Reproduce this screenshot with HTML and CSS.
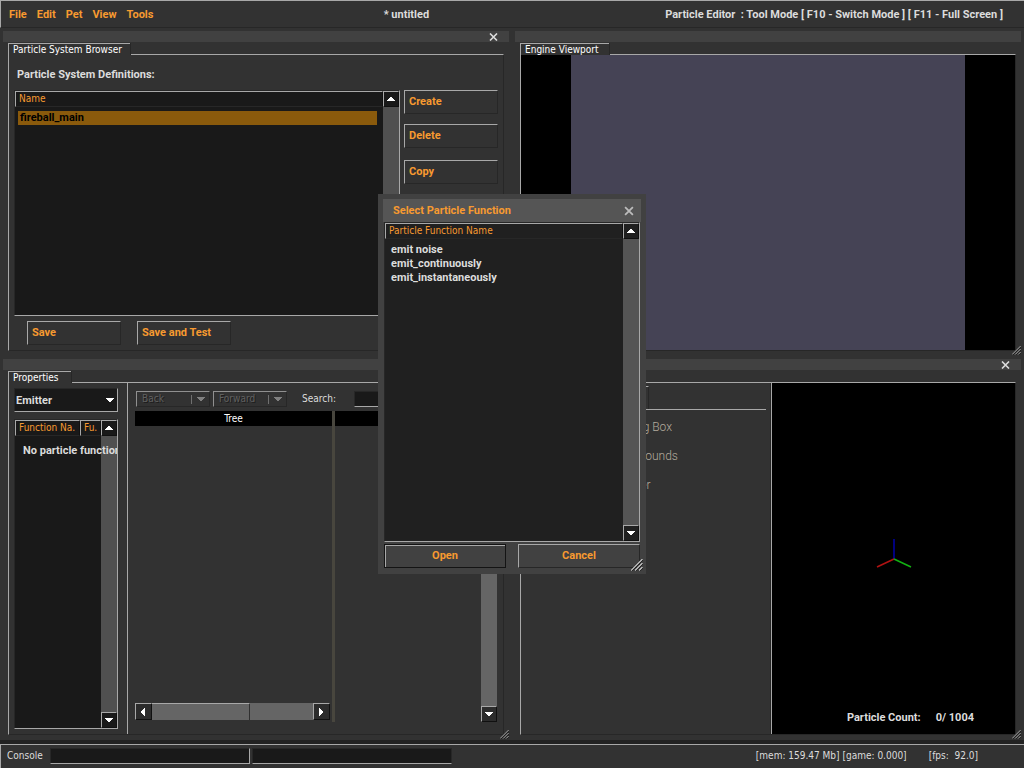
FILE: index.html
```html
<!DOCTYPE html>
<html lang="en">
<head>
<meta charset="utf-8">
<title>Particle Editor</title>
<link rel="stylesheet" href="styles.css">
</head>
<body>
<svg width="0" height="0" class="defs" aria-hidden="true">
  <symbol id="up" viewBox="0 0 8 5"><path d="M3 0h2v1h1v1h1v1h1v1H0V3h1V2h1V1h1z"/></symbol>
  <symbol id="down" viewBox="0 0 8 5"><path d="M0 0h8v1H7v1H6v1H5v1H3V3H2V2H1V1H0z"/></symbol>
  <symbol id="left" viewBox="0 0 5 8"><path d="M4 0v8H3V7H2V6H1V5H0V3h1V2h1V1h1V0z"/></symbol>
  <symbol id="right" viewBox="0 0 5 8"><path d="M0 0v8h1V7h1V6h1V5h1V3H3V2H2V1H1V0z"/></symbol>
  <symbol id="close" viewBox="0 0 9 8"><path d="M1 .5l7 7M8 .5l-7 7" fill="none" stroke="currentColor" stroke-width="1.600"/></symbol>
  <symbol id="grip" viewBox="0 0 12 12"><path d="M0 12L12 0M4 12l8-8M8 12l4-4" fill="none" stroke="#111" stroke-width="2"/><path d="M0 11.500L11.500 0M4 11.500l7.500-7.500M8 11.500l3.500-3.500" fill="none" stroke="#d0d0d0" stroke-width="1.200"/></symbol>
</svg>

<header class="menubar">
  <nav class="menu">
    <button>File</button><button>Edit</button><button>Pet</button><button>View</button><button>Tools</button>
  </nav>
  <div class="menu-info">
    <span>* untitled</span>
    <span class="mode">Particle Editor&nbsp; : Tool Mode [ F10 - Switch Mode ] [ F11 - Full Screen ]</span>
  </div>
</header>

<main class="desktop">
  <section class="window">
    <div class="titlebar"><button class="close" aria-label="Close"><svg><use href="#close"/></svg></button></div>
    <h2 class="tab tab-browser">Particle System Browser</h2>
    <div class="panel browser">
      <h3 class="heading">Particle System Definitions:</h3>
      <div class="browser-row">
        <div class="list">
          <table class="rows">
            <thead><tr><th>Name</th></tr></thead>
            <tbody><tr class="selected"><td>fireball_main</td></tr></tbody>
          </table>
          <div class="scroll">
            <button class="arrow" aria-label="Scroll up"><svg><use href="#up"/></svg></button>
            <div class="track"></div>
            <button class="arrow" aria-label="Scroll down"><svg><use href="#down"/></svg></button>
          </div>
        </div>
        <div class="actions">
          <button class="btn">Create</button>
          <button class="btn">Delete</button>
          <button class="btn copy">Copy</button>
        </div>
      </div>
      <div class="saves">
        <button class="btn">Save</button>
        <button class="btn">Save and Test</button>
      </div>
    </div>
  </section>

  <section class="window">
    <div class="titlebar"></div>
    <h2 class="tab tab-engine">Engine Viewport</h2>
    <div class="panel viewport"><div class="scene"></div></div>
    <svg class="grip"><use href="#grip"/></svg>
  </section>

  <section class="window">
    <div class="titlebar"></div>
    <h2 class="tab tab-props">Properties</h2>
    <div class="panel split">
      <div class="functions">
        <div class="select">
          <select aria-label="Object type"><option>Emitter</option></select>
          <svg><use href="#down"/></svg>
        </div>
        <div class="list function-list">
          <table class="rows">
            <thead><tr><th class="wide">Function Na.</th><th>Fu.</th></tr></thead>
            <tbody><tr><td colspan="2">No particle functions</td></tr></tbody>
          </table>
          <div class="scroll">
            <button class="arrow" aria-label="Scroll up"><svg><use href="#up"/></svg></button>
            <div class="track"></div>
            <button class="arrow" aria-label="Scroll down"><svg><use href="#down"/></svg></button>
          </div>
        </div>
      </div>
      <div class="tree-pane">
        <div class="toolbar">
          <button class="nav" disabled><span>Back</span><svg><use href="#down"/></svg></button>
          <button class="nav" disabled><span>Forward</span><svg><use href="#down"/></svg></button>
          <label for="search">Search:</label>
          <input id="search" class="field" type="text">
        </div>
        <div class="tree">
          <div class="column">
            <div class="column-head">Tree</div>
            <div class="hscroll">
              <button class="arrow" aria-label="Scroll left"><svg class="side"><use href="#left"/></svg></button>
              <div class="thumb"></div>
              <div class="rest"></div>
              <button class="arrow" aria-label="Scroll right"><svg class="side"><use href="#right"/></svg></button>
            </div>
          </div>
          <div class="divider"></div>
          <div class="column"><div class="column-head"></div></div>
          <div class="scroll light">
            <button class="arrow" aria-label="Scroll up"><svg><use href="#up"/></svg></button>
            <div class="track"></div>
            <button class="arrow" aria-label="Scroll down"><svg><use href="#down"/></svg></button>
          </div>
        </div>
      </div>
    </div>
    <svg class="grip"><use href="#grip"/></svg>
  </section>

  <section class="window">
    <div class="titlebar"><button class="close" aria-label="Close"><svg><use href="#close"/></svg></button></div>
    <h2 class="tab tab-preview">Preview</h2>
    <div class="panel preview">
      <div class="options">
        <div class="options-tab"></div>
        <ul class="option-list">
          <li>Show Bounding Box</li>
          <li>Show Engine Bounds</li>
          <li>Show Perimeter</li>
        </ul>
      </div>
      <div class="stage">
        <svg class="axes" viewBox="0 0 36 32">
          <path d="M18 21V1" stroke="#0000a8" stroke-width="1.500"/>
          <path d="M18 21L1 29" stroke="#b01212" stroke-width="1.500"/>
          <path d="M18 21l17 8" stroke="#12b012" stroke-width="1.500"/>
        </svg>
        <p class="count"><span>Particle Count:</span><span>0/ 1004</span></p>
      </div>
    </div>
    <svg class="grip"><use href="#grip"/></svg>
  </section>
</main>

<footer class="status">
  <label for="console">Console</label>
  <input id="console" class="field edge" type="text">
  <input class="field" type="text" aria-label="Console output">
  <p class="stats"><span>[mem: 159.47 Mb] [game: 0.000]</span><span>[fps:&nbsp; 92.0]</span></p>
</footer>

<dialog class="dialog" open aria-labelledby="dialog-title">
  <div class="dialog-title">
    <h2 id="dialog-title">Select Particle Function</h2>
    <button class="close" aria-label="Close"><svg><use href="#close"/></svg></button>
  </div>
  <div class="list dialog-list">
    <table class="rows">
      <thead><tr><th>Particle Function Name</th></tr></thead>
      <tbody>
        <tr><td>emit noise</td></tr>
        <tr><td>emit_continuously</td></tr>
        <tr><td>emit_instantaneously</td></tr>
      </tbody>
    </table>
    <div class="scroll">
      <button class="arrow" aria-label="Scroll up"><svg><use href="#up"/></svg></button>
      <div class="track"></div>
      <button class="arrow" aria-label="Scroll down"><svg><use href="#down"/></svg></button>
    </div>
  </div>
  <div class="dialog-actions">
    <button class="btn default">Open</button>
    <button class="btn">Cancel</button>
  </div>
  <svg class="grip"><use href="#grip"/></svg>
</dialog>
</body>
</html>
```
FILE: styles.css
```css
:root {
  --bg: #323232;
  --bar: #414141;
  --well: #191919;
  --line: #a8a8a8;
  --shade: #272727;
  --accent: #f79a30;
  --text: #dcdcdc;
  --bold: bold 11px/14px Roboto, "Liberation Sans", sans-serif;
  --thin: 10px/12px "DejaVu Sans Condensed", "DejaVu Sans", sans-serif;
}

* { box-sizing: border-box; }

body {
  margin: 0;
  height: 100vh;
  display: flex;
  flex-direction: column;
  overflow: hidden;
  background: var(--bg);
  color: var(--text);
  font: var(--bold);
}

h2, h3, p, ul { margin: 0; padding: 0; list-style: none; font: inherit; }
button, input, select { margin: 0; padding: 0; border: 0; border-radius: 0; background: none; color: inherit; font: inherit; }
svg { display: block; fill: currentColor; }
.defs { position: absolute; }

/* Menu bar */
.menubar {
  height: 28px;
  display: grid;
  grid-template-columns: 375fr 641fr;
  align-items: center;
  padding: 2px 0 0 8px;
  border-top: 1px solid var(--line);
  border-left: 1px solid var(--line);
  border-bottom: 1px solid var(--shade);
}
.menu { display: flex; gap: 10px; color: var(--accent); }
.menu-info { display: flex; justify-content: space-between; padding-right: 21px; }

/* Desktop windows */
.desktop {
  flex: 1;
  min-height: 0;
  display: grid;
  grid-template-columns: minmax(0, 1fr) minmax(0, 1fr);
  grid-template-rows: minmax(0, 325fr) minmax(0, 381fr);
  gap: 3px 6px;
  padding: 3px 3px 0;
}
.window { position: relative; display: flex; flex-direction: column; padding-bottom: 5px; }
.titlebar {
  height: 11px;
  display: flex;
  justify-content: flex-end;
  padding-right: 11px;
  background: var(--bar);
}
.close { display: flex; align-items: center; }
.close svg { width: 9px; height: 8px; }
.tab {
  align-self: flex-start;
  z-index: 1;
  height: 12px;
  margin: 1px 5px -1px;
  padding: 0 0 0 4px;
  border: 1px solid var(--line);
  border-width: 1px 0 0 1px;
  box-shadow: 1px 0 var(--shade);
  background: var(--bg);
  color: #fff;
  font: var(--thin);
  white-space: nowrap;
}
.panel {
  flex: 1;
  min-height: 0;
  margin: 0 5px;
  border: 1px solid;
  border-color: var(--line) var(--shade) var(--shade) var(--line);
}
.grip { position: absolute; right: 0; bottom: 1px; width: 9px; height: 9px; }

/* Buttons */
.btn {
  width: 94px;
  height: 24px;
  padding: 0 4px;
  border: 1px solid;
  border-color: var(--line) var(--shade) var(--shade) var(--line);
  color: var(--accent);
  text-align: left;
}

/* Lists */
.list {
  display: grid;
  grid-template-columns: minmax(0, 1fr) 16px;
  border: 1px solid var(--shade);
  border-right-color: var(--line);
  border-bottom-color: var(--line);
  background: var(--well);
}
.rows { align-self: start; width: 100%; border-spacing: 0; table-layout: fixed; }
.rows th {
  height: 16px;
  padding: 0 3px;
  border: 1px solid;
  border-color: var(--line) #101010 var(--shade) var(--line);
  color: var(--accent);
  font: var(--thin);
  text-align: left;
  white-space: nowrap;
}
.rows td { height: 14px; padding: 0 6px; white-space: nowrap; }
.rows tbody::before { content: ""; display: block; height: 4px; }
.selected td {
  border: solid var(--well);
  border-width: 0 6px 0 3px;
  padding: 0 2px;
  background: #8a5a0c;
  color: #000;
}

/* Scroll bars */
.scroll { display: grid; grid-template-rows: 16px 1fr 16px; min-height: 0; }
.arrow {
  display: grid;
  place-items: center;
  border: 1px solid;
  border-color: var(--line) #101010 #101010 var(--line);
  background: var(--well);
  color: #fff;
}
.arrow svg { width: 8px; height: 5px; }
.arrow .side { width: 5px; height: 8px; }
.track { background: #505050; }
.light .track { background: #656565; }
.light .arrow, .hscroll .arrow { background: #2c2c2c; }

/* Particle system browser */
.tab-browser { width: 122px; }
.browser { display: flex; flex-direction: column; padding: 13px 5px 5px; }
.heading { padding: 0 3px 8px; }
.browser-row { flex: 1; min-height: 0; display: grid; grid-template-columns: 1fr 94px; gap: 4px; }
.actions { display: flex; flex-direction: column; gap: 10px; }
.copy { margin-top: 2px; }
.saves { display: flex; gap: 16px; padding: 5px 13px 0; }

/* Engine viewport */
.tab-engine { width: 89px; }
.viewport { display: flex; justify-content: center; background: #000; }
.scene { height: 100%; aspect-ratio: 4 / 3; background: #454355; }

/* Properties */
.tab-props { width: 63px; }
.split { display: grid; grid-template-columns: 118px minmax(0, 1fr); }
.functions { display: flex; flex-direction: column; gap: 7px; padding: 5px 9px 5px 5px; min-height: 0; }
.select { position: relative; color: #fff; }
.select select {
  display: block;
  width: 100%;
  height: 24px;
  padding: 2px 1px 0;
  appearance: none;
  border: 1px solid var(--shade);
  border-right-color: var(--line);
  border-bottom-color: var(--line);
  background: var(--well);
  color: var(--text);
}
.select svg { position: absolute; right: 4px; top: 10px; width: 8px; height: 5px; pointer-events: none; }
.function-list { flex: 1; overflow: hidden; }
.function-list .wide { width: 65px; }
.function-list .rows { position: relative; z-index: 1; }
.function-list td { padding: 4px 8px 0; }
.tree-pane {
  display: flex;
  flex-direction: column;
  gap: 2px;
  min-height: 0;
  padding: 6px 6px 12px 7px;
  border-left: 1px solid var(--line);
}
.toolbar { display: flex; align-items: center; gap: 3px; height: 20px; padding-left: 1px; font: var(--thin); }
.nav {
  display: flex;
  align-items: center;
  justify-content: space-between;
  width: 74px;
  height: 16px;
  padding: 0 4px 0 5px;
  border: 1px solid;
  border-color: #909090 var(--shade) var(--shade) #909090;
  color: #606060;
  text-shadow: 1px 1px #1c1c1c;
}
.nav svg { width: 14px; height: 9px; padding: 2px 0 2px 5px; border-left: 1px solid #707070; color: #808080; }
.toolbar label { padding: 0 15px 0 12px; }
.toolbar .field { flex: 1; min-width: 0; }
.field {
  height: 16px;
  border: 1px solid var(--shade);
  border-bottom-color: var(--line);
  background: var(--well);
  font: var(--thin);
}
.field.edge { border-right-color: var(--line); }
.tree { flex: 1; min-height: 0; display: grid; grid-template-columns: 197px 3px minmax(0, 1fr) 16px; }
.column { display: flex; flex-direction: column; justify-content: space-between; }
.column-head { height: 15px; background: #000; color: #fff; font: var(--thin); line-height: 15px; text-align: center; }
.divider { background: #48463e; }
.hscroll { display: grid; grid-template-columns: 17px 98px 1fr 17px; height: 17px; margin: 0 2px 2px 0; }
.thumb { border-top: 1px solid var(--line); border-right: 1px solid #303030; background: #656565; }
.rest { background: #656565; }

/* Preview */
.tab-preview { width: 64px; }
.preview { display: grid; grid-template-columns: minmax(0, 250fr) minmax(0, 244fr); }
.options { padding: 3px 4px 0 0; border-right: 1px solid var(--shade); }
.options-tab {
  width: 128px;
  height: 23px;
  border-top: 1px solid var(--line);
  border-right: 1px solid var(--shade);
}
.option-list {
  display: grid;
  gap: 14px;
  padding: 10px 0 0 46px;
  border-top: 1px solid var(--line);
  color: #b4ac9e;
  font: 300 12px/15px Roboto, sans-serif;
}
.stage {
  display: flex;
  flex-direction: column;
  align-items: center;
  justify-content: flex-end;
  border-left: 1px solid var(--line);
  background: #000;
}
.axes { width: 36px; height: 32px; margin-bottom: 141px; fill: none; }
.count { display: flex; gap: 15px; padding: 0 0 9px 34px; }

/* Status bar */
.status {
  height: 28px;
  display: flex;
  align-items: center;
  gap: 2px;
  padding: 0 46px 0 6px;
  border-top: 4px solid #222;
  box-shadow: inset 1px 1px var(--line);
  font: var(--thin);
}
.status label { width: 42px; padding-left: 1px; }
.status .field { width: 200px; }
.stats { display: flex; gap: 22px; margin-left: auto; }

/* Dialog */
.dialog {
  position: fixed;
  inset: 0;
  z-index: 5;
  display: flex;
  flex-direction: column;
  width: 268px;
  height: 380px;
  margin: auto;
  padding: 5px 5px 6px;
  border: 0;
  background: var(--bar);
  color: var(--text);
}
.dialog-title {
  display: flex;
  align-items: center;
  justify-content: space-between;
  height: 23px;
  padding: 0 7px 0 10px;
  background: #555;
  color: var(--accent);
}
.dialog-title .close { color: #bcbcbc; }
.dialog-title .close svg { width: 10px; height: 10px; }
.dialog-list { flex: 1; margin: 0 1px 2px; background: #202020; }
.dialog-list .arrow { background: #202020; }
.dialog-list .track { background: #555; }
.dialog-actions { display: grid; grid-template-columns: 1fr 1fr; gap: 12px; padding: 0 1px; }
.dialog-actions .btn { width: auto; text-align: center; }
.default { outline: 1px solid #141414; outline-offset: -1px; box-shadow: inset 1px 1px var(--line); }
.dialog .grip { right: 3px; bottom: 3px; width: 12px; height: 12px; }
```
